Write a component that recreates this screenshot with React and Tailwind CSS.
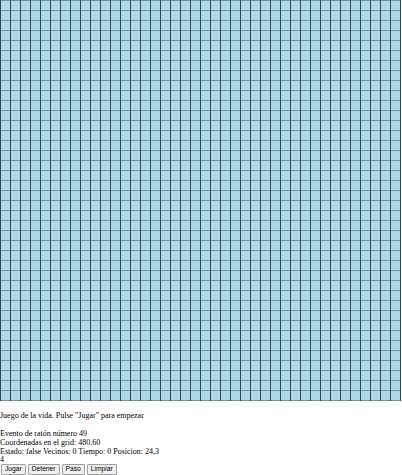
import React from "react";

function Grid() {
  const lines = [];
  for (let i = 0; i <= 40; i++) {
    lines.push(
      <rect key={"h" + i} x={0} y={i * 10} width={401} height={1} fill="#7594a0" />
    );
  }
  for (let i = 0; i <= 40; i++) {
    lines.push(
      <rect key={"v" + i} x={i * 10} y={0} width={1} height={401} fill="#2f4a55" />
    );
  }
  return (
    <svg width="401" height="401" viewBox="0 0 401 401" className="block" shapeRendering="crispEdges">
      <rect x="0" y="0" width="401" height="401" fill="#add8e6" />
      {lines}
    </svg>
  );
}

function Btn({ children }) {
  return (
    <button className="h-[11px] px-[3px] border border-[#a0a0a0] rounded-[1px] bg-[#efefef] text-[6.7px] leading-[7.7px] text-black font-['Liberation_Sans',Arial,sans-serif]">
      {children}
    </button>
  );
}

export default function App() {
  return (
    <div className="bg-white w-[402px] h-[475px] overflow-hidden font-['Liberation_Serif','Times_New_Roman',serif] text-[8px] leading-[9.2px] text-black">
      <Grid />
      <p className="mt-[9.5px]">Juego de la vida. Pulse "Jugar" para empezar</p>
      <div className="mt-[8.8px]">
        <div>Evento de ratón número 49</div>
        <div>Coordenadas en el grid: 480,60</div>
        <div>Estado: false Vecinos: 0 Tiempo: 0 Posicion: 24,3</div>
        <div className="leading-[7.6px]">4</div>
        <div className="flex gap-[2px] pl-[1px]">
          <Btn>Jugar</Btn>
          <Btn>Detener</Btn>
          <Btn>Paso</Btn>
          <Btn>Limpiar</Btn>
        </div>
      </div>
    </div>
  );
}
